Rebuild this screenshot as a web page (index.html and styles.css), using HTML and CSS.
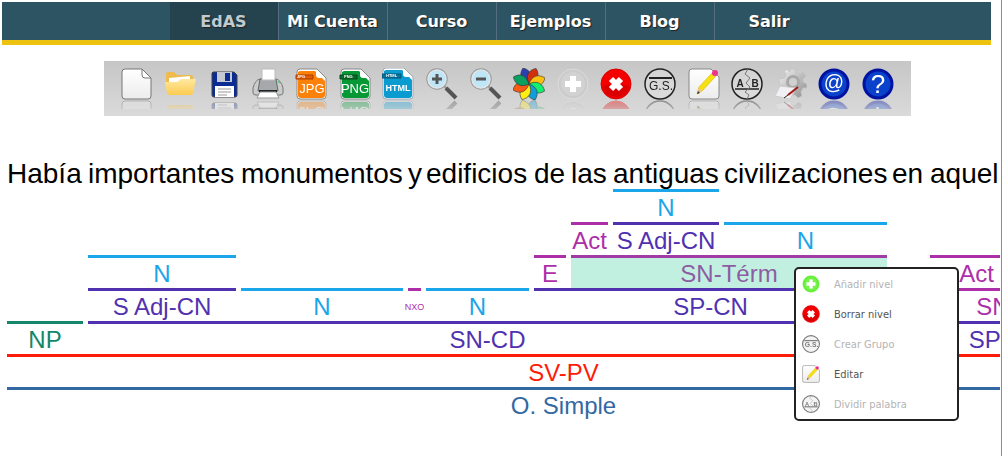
FILE: index.html
```html
<!DOCTYPE html>
<html lang="es">
<head>
    <meta charset="UTF-8">
    <meta name="viewport" content="width=device-width, initial-scale=1.0">
    <title>EdAS</title>
    <link rel="stylesheet" href="styles.css">
</head>
<body>
    <!-- Iconos compartidos por la barra y el menú -->
    <svg class="defs" aria-hidden="true">
        <defs>
            <linearGradient id="paper" x1="0" y1="0" x2="0" y2="1">
                <stop offset="0" stop-color="#ffffff"/>
                <stop offset="1" stop-color="#ececec"/>
            </linearGradient>
            <linearGradient id="folderFill" x1="0" y1="0" x2="0" y2="1">
                <stop offset="0" stop-color="#ffe9a0"/>
                <stop offset="1" stop-color="#fccb50"/>
            </linearGradient>
            <linearGradient id="metal" x1="0" y1="0" x2="1" y2="1">
                <stop offset="0" stop-color="#f4f4f4"/>
                <stop offset="1" stop-color="#8c8c8c"/>
            </linearGradient>
            <path id="petal" d="M16 16C7 13 6 6 10 0C18 2 20 8 16 16Z"/>
        </defs>
        <symbol id="i-add" viewBox="0 0 32 32">
            <circle cx="16" cy="16" r="15" fill="currentColor" stroke="#fff" stroke-opacity=".3"/>
            <circle cx="16" cy="16" r="12" fill="#fff" fill-opacity=".15"/>
            <path d="M16 8V24M8 16H24" stroke="#fff" stroke-width="6"/>
        </symbol>
        <symbol id="i-delete" viewBox="0 0 32 32">
            <circle cx="16" cy="16" r="15" fill="#f40000" stroke="#d80000"/>
            <path d="M3 18Q16 14 29 18Q27 29 16 29Q5 29 3 18Z" fill="#c80000" fill-opacity=".6"/>
            <path d="M11 11L21 21M21 11L11 21" stroke="#fff" stroke-width="6"/>
        </symbol>
        <symbol id="i-edit" viewBox="0 0 32 32">
            <path d="M4 1H23L31 9V28Q31 31 28 31H4Q1 31 1 28V4Q1 1 4 1Z" fill="url(#paper)" stroke="#888"/>
            <path d="M9 26L11 19L24 5L28 8L14 23Z" fill="#f7e010" stroke="#d8b800" stroke-width=".6"/>
            <path d="M9 26L11 19L14 23Z" fill="#efc38e"/>
            <path d="M9 26L10 23L12 25Z" fill="#333"/>
            <path d="M24 5L28 8" stroke="#bbb" stroke-width="2"/>
            <circle cx="27" cy="5" r="3" fill="#f0308c"/>
        </symbol>
    </svg>

    <nav class="menu">
        <a href="#" class="active">EdAS</a>
        <a href="#">Mi Cuenta</a>
        <a href="#">Curso</a>
        <a href="#">Ejemplos</a>
        <a href="#">Blog</a>
        <a href="#">Salir</a>
    </nav>

    <div class="toolbar">
        <button type="button" aria-label="Nuevo">
            <svg viewBox="0 0 32 32">
                <path d="M4 1H21L30 10V28Q30 31 27 31H4Q1 31 1 28V4Q1 1 4 1Z" fill="url(#paper)" stroke="#777"/>
                <path d="M21 1V7Q21 10 24 10H30Z" fill="#fff" stroke="#777"/>
            </svg>
        </button>
        <button type="button" aria-label="Abrir">
            <svg viewBox="0 0 32 32">
                <path d="M1 27V6Q1 4 3 4H9L12 7H26Q28 7 28 9V15H1Z" fill="#eebb4c"/>
                <path d="M4 10L25 8V18H4Z" fill="#fff"/>
                <path d="M0 14H12L16 11H31L28 25Q28 27 26 27H4Q2 27 2 25Z" fill="url(#folderFill)"/>
            </svg>
        </button>
        <button type="button" aria-label="Guardar">
            <svg viewBox="0 0 32 32">
                <path d="M5 4H26L29 7V27Q29 29 27 29H6Q4 29 4 27V5Z" fill="#0a2c94" stroke="#444"/>
                <path d="M9 4H24V14H9Z" fill="#c4c9d2"/>
                <path d="M17 5H22V13H17Z" fill="#0a2c94"/>
                <path d="M7 18H26V29H7Z" fill="#fff"/>
                <path d="M10 21H23M10 24H23M10 27H19" stroke="#999"/>
            </svg>
        </button>
        <button type="button" aria-label="Imprimir">
            <svg viewBox="0 0 32 32">
                <path d="M8 11H24Q29 12 31 20V25Q31 27 28 27H4Q1 27 1 25V20Q3 12 8 11Z" fill="#c9cccb" stroke="#777"/>
                <path d="M8 11H24L26 23H6Z" fill="#a6a9ab" stroke="#666"/>
                <path d="M10 1H23V12H10Z" fill="#fff" stroke="#bbb"/>
                <path d="M7 23H25" stroke="#222" stroke-width="2"/>
                <path d="M8 24H24L27 30H5Z" fill="#fff" stroke="#999"/>
                <circle cx="27" cy="14" r="1" fill="#3c7"/>
            </svg>
        </button>
        <button type="button" aria-label="Exportar a JPG">
            <svg viewBox="0 0 32 32">
                <path d="M5 1H22L31 10V28Q31 31 28 31H5Q2 31 2 28V4Q2 1 5 1Z" fill="#fff" stroke="#888"/>
                <path d="M5 3H20L30 13V27Q30 30 27 30H6Q3 30 3 27V4Z" fill="#fb8109"/>
                <path d="M21 2V7Q21 10 24 10H30Z" fill="#fff"/>
                <path d="M1 7H18V11H1Z" fill="#e85a05" stroke="#a64000"/>
                <text x="2" y="10" class="tag">JPG</text>
                <text x="17" y="25" class="kind">JPG</text>
            </svg>
        </button>
        <button type="button" aria-label="Exportar a PNG">
            <svg viewBox="0 0 32 32">
                <path d="M5 1H22L31 10V28Q31 31 28 31H5Q2 31 2 28V4Q2 1 5 1Z" fill="#fff" stroke="#888"/>
                <path d="M5 3H20L30 13V27Q30 30 27 30H6Q3 30 3 27V4Z" fill="#079836"/>
                <path d="M21 2V7Q21 10 24 10H30Z" fill="#fff"/>
                <path d="M1 7H18V11H1Z" fill="#096b2b" stroke="#044a1b"/>
                <text x="5" y="10" class="tag">PNG</text>
                <text x="16" y="25" class="kind">PNG</text>
            </svg>
        </button>
        <button type="button" aria-label="Exportar a HTML">
            <svg viewBox="0 0 32 32">
                <path d="M4 0H22L31 9V28Q31 31 28 31H4Q1 31 1 28V3Q1 0 4 0Z" fill="#fff" stroke="#9ab"/>
                <path d="M4 2H20L30 12V27Q30 30 27 30H5Q2 30 2 27V3Z" fill="#0a9bd0"/>
                <path d="M21 1V6Q21 9 24 9H30Z" fill="#fff"/>
                <path d="M0 6H19V10H0Z" fill="#06719b" stroke="#035675"/>
                <text x="4" y="9" class="tag">HTML</text>
                <text x="16" y="23" class="kind-html">HTML</text>
            </svg>
        </button>
        <button type="button" aria-label="Acercar">
            <svg viewBox="0 0 32 32">
                <path d="M18 18L22 22" stroke="#999" stroke-width="2"/>
                <path d="M20 20L30 30" stroke="#555" stroke-width="4"/>
                <circle cx="11" cy="11" r="10" fill="#bfe6f7" stroke="#999" stroke-width="1.5"/>
                <circle cx="11" cy="11" r="9" fill="none" stroke="#dfe5e8" stroke-width="1.5"/>
                <path d="M6 11H16M11 6V16" stroke="#555" stroke-width="3"/>
            </svg>
        </button>
        <button type="button" aria-label="Alejar">
            <svg viewBox="0 0 32 32">
                <path d="M18 18L22 22" stroke="#999" stroke-width="2"/>
                <path d="M20 20L30 30" stroke="#555" stroke-width="4"/>
                <circle cx="11" cy="11" r="10" fill="#bfe6f7" stroke="#999" stroke-width="1.5"/>
                <circle cx="11" cy="11" r="9" fill="none" stroke="#dfe5e8" stroke-width="1.5"/>
                <path d="M6 11H16" stroke="#555" stroke-width="3"/>
            </svg>
        </button>
        <button type="button" aria-label="Colores">
            <svg viewBox="0 0 32 32">
                <g stroke="#333" stroke-width=".6">
                    <use href="#petal" fill="#2b3fae"/>
                    <use href="#petal" fill="#d42f0c" transform="rotate(45 16 16)"/>
                    <use href="#petal" fill="#fcc010" transform="rotate(90 16 16)"/>
                    <use href="#petal" fill="#12f06c" transform="rotate(135 16 16)"/>
                    <use href="#petal" fill="#109ed8" transform="rotate(180 16 16)"/>
                    <use href="#petal" fill="#ffee10" transform="rotate(225 16 16)"/>
                    <use href="#petal" fill="#f85c14" transform="rotate(270 16 16)"/>
                    <use href="#petal" fill="#0b9f62" transform="rotate(315 16 16)"/>
                </g>
            </svg>
        </button>
        <button type="button" aria-label="Añadir nivel" class="off" disabled><svg><use href="#i-add"/></svg></button>
        <button type="button" aria-label="Borrar nivel"><svg><use href="#i-delete"/></svg></button>
        <button type="button" aria-label="Crear grupo">
            <svg viewBox="0 0 32 32">
                <circle cx="16" cy="16" r="15" fill="#fff" fill-opacity=".2" stroke="#222" stroke-width="1.5"/>
                <path d="M5 10H28" stroke="#222" stroke-width="2"/>
                <text x="17" y="22" class="gs">G.S.</text>
            </svg>
        </button>
        <button type="button" aria-label="Editar"><svg><use href="#i-edit"/></svg></button>
        <button type="button" aria-label="Dividir palabra">
            <svg viewBox="0 0 32 32">
                <circle cx="16" cy="16" r="15" fill="#fff" fill-opacity=".2" stroke="#222" stroke-width="1.5"/>
                <path d="M4 21H28" stroke="#222" stroke-width="1.5"/>
                <path d="M17 1L14 6L19 10L15 15L19 19L14 24L18 27L16 31" fill="none" stroke="#777"/>
                <text x="9" y="19" class="ab">A</text>
                <text x="24" y="19" class="ab">B</text>
            </svg>
        </button>
        <button type="button" aria-label="Configuración">
            <svg viewBox="0 0 32 32">
                <path d="M15 1H20L21 5L25 6L28 4L31 8L28 11V14L32 16V20L28 20L26 24L27 28L23 30L20 27H15L10 26L5 22L8 18L4 16V11L9 10L11 7L9 3L12 1L15 4Z" fill="url(#metal)" stroke="#c4c4c4"/>
                <circle cx="18" cy="14" r="7" fill="#a9a9a9"/>
                <circle cx="18" cy="14" r="4" fill="#d0d0d0"/>
                <path d="M5 18L21 20L15 31L0 28Z" fill="#f1f1f4" stroke="#ccc"/>
                <path d="M13 27L23 19" stroke="#a01818" stroke-width="2"/>
                <path d="M9 30L13 27" stroke="#222"/>
            </svg>
        </button>
        <button type="button" aria-label="Contacto">
            <svg viewBox="0 0 32 32">
                <circle cx="16" cy="16" r="14" fill="#0a42cc" stroke="#0012a0" stroke-width="3"/>
                <text x="16" y="21" class="sign">@</text>
            </svg>
        </button>
        <button type="button" aria-label="Ayuda">
            <svg viewBox="0 0 32 32">
                <circle cx="16" cy="16" r="14" fill="#0a42cc" stroke="#0012a0" stroke-width="3"/>
                <text x="16" y="25" class="sign-big">?</text>
            </svg>
        </button>
    </div>

    <main class="editor">
        <!-- Una columna por palabra, una fila por nivel -->
        <div class="analysis">
            <span class="word">Había</span>
            <span class="word">importantes</span>
            <span class="word">monumentos</span>
            <span class="word">y</span>
            <span class="word">edificios</span>
            <span class="word">de</span>
            <span class="word">las</span>
            <span class="word">antiguas</span>
            <span class="word">civilizaciones</span>
            <span class="word">en</span>
            <span class="word">aquel</span>

            <div class="node n r2 antiguas">N</div>

            <div class="node act r3 las">Act</div>
            <div class="node sadj r3 antiguas">S Adj-CN</div>
            <div class="node n r3 civilizaciones">N</div>

            <div class="node n r4 importantes">N</div>
            <div class="node act r4 de">E</div>
            <div class="node act r4 termino selected">SN-Térm</div>
            <div class="node act r4 aquel">Act</div>

            <div class="node sadj r5 importantes">S Adj-CN</div>
            <div class="node n r5 monumentos">N</div>
            <div class="node act small r5 y">NXO</div>
            <div class="node n r5 edificios">N</div>
            <div class="node sadj r5 preposicional">SP-CN</div>
            <div class="node act r5 final">SN-Térm</div>

            <div class="node np r6 habia">NP</div>
            <div class="node sadj r6 objeto">SN-CD</div>
            <div class="node sadj r6 lugar">SP-CC</div>

            <div class="node sv r7 todo">SV-PV</div>
            <div class="node oracion r8 todo">O. Simple</div>
        </div>

        <div class="context">
            <button type="button" disabled><svg class="green"><use href="#i-add"/></svg>Añadir nivel</button>
            <button type="button"><svg><use href="#i-delete"/></svg>Borrar nivel</button>
            <button type="button" disabled>
                <svg class="dim" viewBox="0 0 32 32">
                    <circle cx="16" cy="16" r="15" fill="#eee" stroke="#222" stroke-width="2"/>
                    <path d="M4 10H28" stroke="#222" stroke-width="2"/>
                    <text x="17" y="22" class="gs bold">G.S.</text>
                </svg>
                Crear Grupo
            </button>
            <button type="button"><svg><use href="#i-edit"/></svg>Editar</button>
            <button type="button" disabled>
                <svg class="dim" viewBox="0 0 32 32">
                    <circle cx="16" cy="16" r="15" fill="#eee" stroke="#222" stroke-width="2"/>
                    <path d="M4 21H28" stroke="#222" stroke-width="2"/>
                    <path d="M17 1L14 6L19 10L15 15L19 19L14 24L18 27L16 31" fill="none" stroke="#777"/>
                    <text x="9" y="19" class="ab">A</text>
                    <text x="24" y="19" class="ab">B</text>
                </svg>
                Dividir palabra
            </button>
        </div>
    </main>
</body>
</html>
```

FILE: styles.css
```css
* {
    box-sizing: border-box;
}
body {
    margin: 0 1px 0 0;
    padding: 2px 1px 0 2px;
    min-height: 100vh;
    border-right: 1px solid #8c8c8c;
    background-color: #fff;
    font-family: "Liberation Sans", Arial, sans-serif;
}
.defs {
    position: absolute;
    width: 0;
    height: 0;
}

/* Menú principal */
.menu {
    display: flex;
    justify-content: center;
    margin-right: 9px;
    background-color: #2d5463;
    border-bottom: 5px solid #eec211;
}
.menu a {
    width: 109px;
    height: 38px;
    line-height: 40px;
    border-right: 1px solid #566c80;
    color: #fff;
    font-family: "DejaVu Sans", Verdana, sans-serif;
    font-size: 16px;
    font-weight: bold;
    text-align: center;
    text-decoration: none;
    text-shadow: 1px 1px 1px #222;
}
.menu a:last-child {
    border-right: none;
}
.menu a.active {
    background-color: #24434f;
    color: #c0cbd0;
}

/* Barra de herramientas */
.toolbar {
    display: flex;
    justify-content: space-between;
    margin: 16px 89px 0 102px;
    padding: 7px 17px 16px;
    background: linear-gradient(#c6c6c6, #dadada);
}
.toolbar button {
    width: 32px;
    height: 32px;
    padding: 0;
    border: none;
    background: none;
    -webkit-box-reflect: below 0 linear-gradient(transparent 72%, rgba(0, 0, 0, 0.25) 72%, rgba(0, 0, 0, 0.4));
}
.toolbar svg {
    display: block;
    width: 32px;
    height: 32px;
}
.toolbar .off {
    color: #cbcbcb;
}
svg text {
    font-family: "Liberation Sans", Arial, sans-serif;
}
.tag {
    font-size: 4px;
    font-weight: bold;
    fill: #fff;
}
.kind {
    font-size: 13px;
    fill: #fff;
    text-anchor: middle;
}
.kind-html {
    font-size: 9px;
    font-weight: bold;
    fill: #fff;
    text-anchor: middle;
}
.gs {
    font-size: 12px;
    fill: #222;
    text-anchor: middle;
}
.bold {
    font-weight: bold;
}
.ab {
    font-size: 10px;
    font-weight: bold;
    fill: #222;
    text-anchor: middle;
}
.sign {
    font-size: 20px;
    fill: #fff;
    text-anchor: middle;
}
.sign-big {
    font-size: 26px;
    fill: #fff;
    text-anchor: middle;
}

/* Análisis sintáctico */
.editor {
    position: relative;
    margin-top: 40px;
    padding-left: 5px;
    overflow: hidden;
    min-height: 300px;
}
.analysis {
    display: grid;
    grid-template-columns: 76px 148px 162px 13px 103px 32px 37px 106px 163px 33px 93px 92px;
    grid-template-rows: repeat(8, 33px);
    column-gap: 5px;
}
.word {
    grid-row: 1;
    font-size: 28px;
    line-height: 36px;
    white-space: nowrap;
}
.node {
    display: flex;
    justify-content: center;
    border-top: 3px solid;
    font-size: 24px;
    line-height: 32px;
    white-space: nowrap;
}
.small {
    font-size: 9px;
}
.r2 { grid-row: 2; }
.r3 { grid-row: 3; }
.r4 { grid-row: 4; }
.r5 { grid-row: 5; }
.r6 { grid-row: 6; }
.r7 { grid-row: 7; }
.r8 { grid-row: 8; }

.habia { grid-column: 1; }
.importantes { grid-column: 2; }
.monumentos { grid-column: 3; }
.y { grid-column: 4; }
.edificios { grid-column: 5; }
.de { grid-column: 6; }
.las { grid-column: 7; }
.antiguas { grid-column: 8; }
.civilizaciones { grid-column: 9; }
.aquel { grid-column: 11; }
.termino { grid-column: 7 / 10; }
.preposicional { grid-column: 6 / 10; }
.objeto { grid-column: 2 / 10; }
.final { grid-column: 11 / 13; }
.lugar { grid-column: 10 / 13; }
.todo { grid-column: 1 / 13; }

.n { color: #1ba5ea; }
.act { color: #ad2fa8; }
.sadj { color: #5032b0; }
.np { color: #15866b; }
.sv { color: #fe1b07; }
.oracion { color: #3369a2; }
.selected {
    background-color: #c2f0e0;
    color: #8d5da3;
    border-top-color: #a03ca6;
}

/* Menú contextual */
.context {
    position: absolute;
    top: 111px;
    left: 792px;
    width: 165px;
    border: 2px solid #222;
    border-radius: 5px;
    background-color: #fff;
}
.context button {
    display: flex;
    align-items: center;
    gap: 14px;
    width: 100%;
    height: 30px;
    padding: 0 6px;
    border: none;
    background: none;
    color: #555;
    font-family: "DejaVu Sans Condensed", Tahoma, sans-serif;
    font-size: 11px;
}
.context button:disabled {
    color: #b4b4b4;
}
.context svg {
    width: 18px;
    height: 18px;
}
.green {
    color: #5cf02c;
}
.dim {
    opacity: 0.6;
}
```
